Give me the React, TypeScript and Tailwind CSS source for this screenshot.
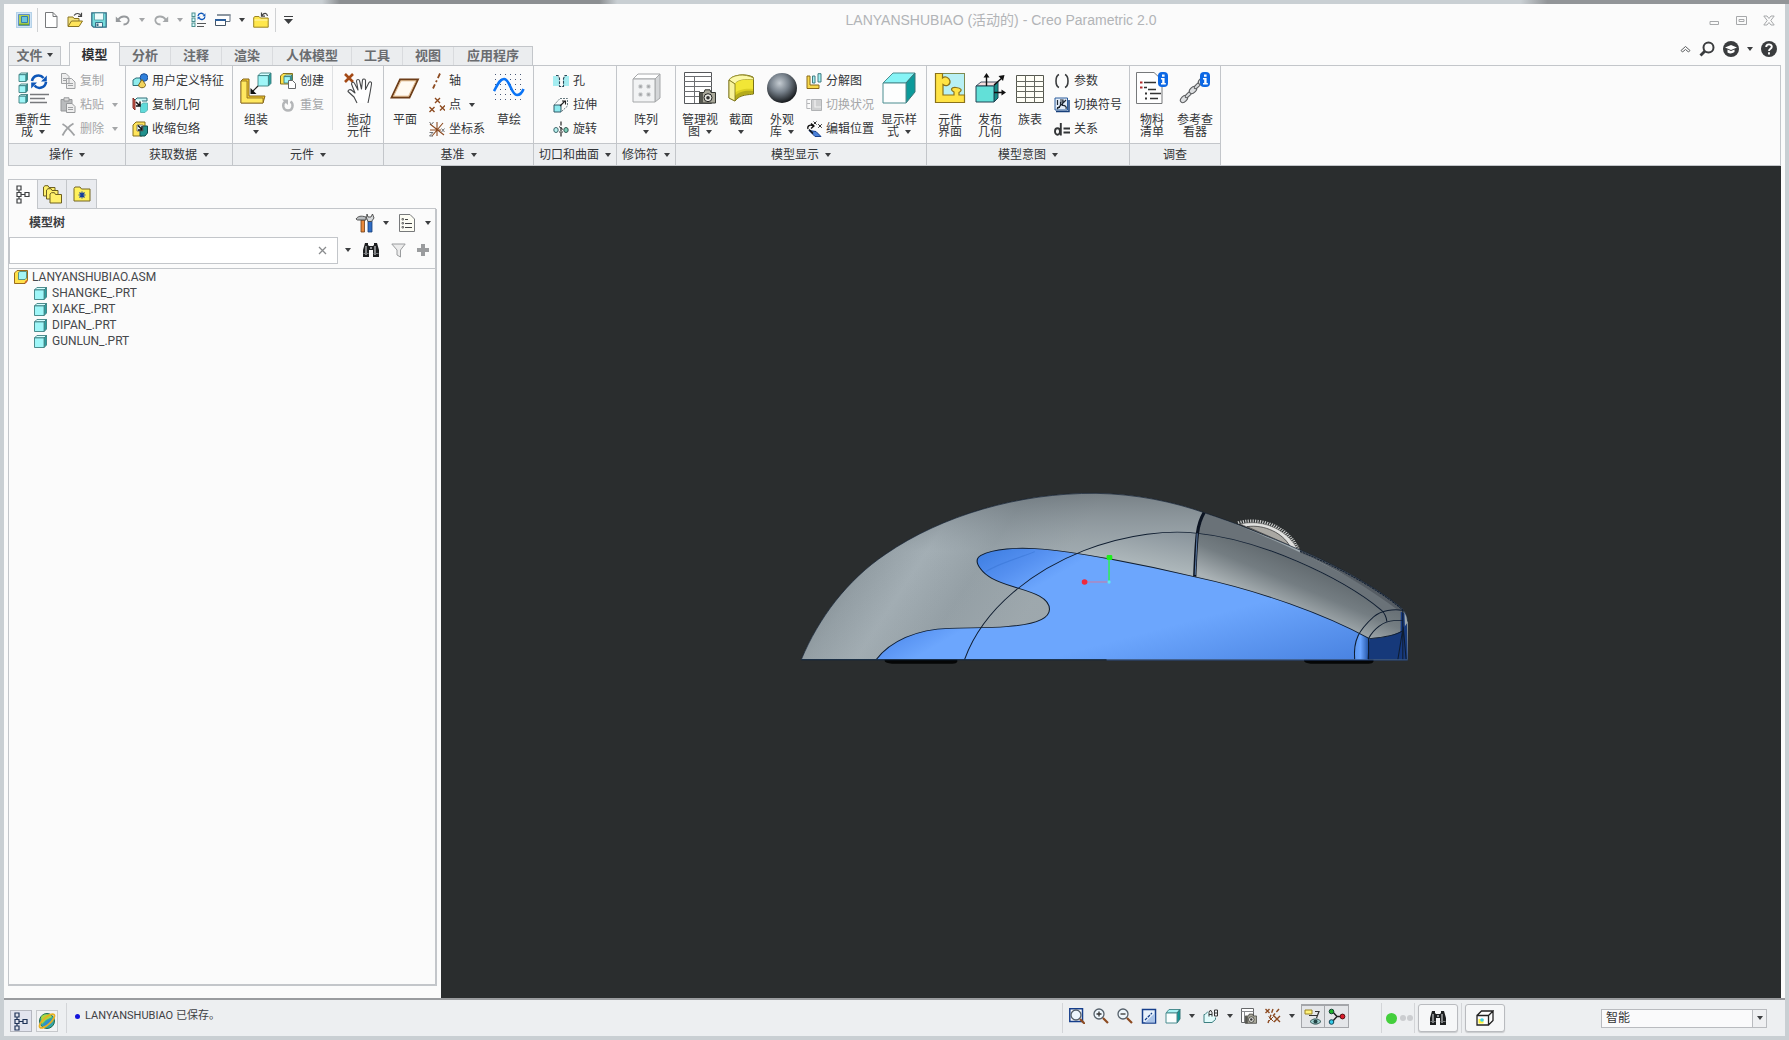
import React from "react";

type Kids = { children?: React.ReactNode };

/* ---------- drawing helpers ---------- */

function Ic({ w = 16, h = 16, vb, children }: Kids & { w?: number; h?: number; vb?: string }) {
  return (
    <svg width={w} height={h} viewBox={vb ?? `0 0 ${w} ${h}`} fill="none" className="block shrink-0" aria-hidden="true">
      {children}
    </svg>
  );
}

function Arrow({ light }: { light?: boolean }) {
  return (
    <Ic w={6} h={4}>
      <path d="M0 0H6L3 4Z" fill={light ? "#a4a6a8" : "#3c3e40"} />
    </Ic>
  );
}

const Cube = ({ x, y, s }: { x: number; y: number; s: number }) => (
  <g transform={`translate(${x} ${y}) scale(${s})`} stroke="#3c7f80" strokeWidth={0.9 / s} strokeLinejoin="round">
    <path d="M0 2 2 0H10L8 2Z" fill="#d4ffff" />
    <path d="M8 2 10 0V8L8 10Z" fill="#28a0a0" />
    <path d="M0 2H8V10H0Z" fill="#9ff6f8" />
  </g>
);

const Swirl = ({ x, y, s }: { x: number; y: number; s: number }) => (
  <g transform={`translate(${x} ${y}) scale(${s})`} stroke="#0d56b8" strokeWidth="2.6">
    <path d="M2 8A6.5 6.5 0 0 1 13.5 5" />
    <path d="M16 9A6.5 6.5 0 0 1 4.500 12.500" />
    <path d="M16.800 2.500V8.500H11Z" fill="#0d56b8" stroke="none" />
    <path d="M1.200 15.500V9.500H7Z" fill="#0d56b8" stroke="none" />
  </g>
);

const Cross = ({ x, y, r = 2.5, c = "#8c4a20", w = 1.4 }: { x: number; y: number; r?: number; c?: string; w?: number }) => (
  <path d={`M${x - r} ${y - r}L${x + r} ${y + r}M${x + r} ${y - r}L${x - r} ${y + r}`} stroke={c} strokeWidth={w} />
);

/* ---------- quick access icons ---------- */

const AppIcon = () => (
  <Ic>
    <rect x="0.500" y="0.500" width="15" height="15" fill="#cfe3f4" stroke="#b5d2e8" />
    <path d="M2.500 2.500H13.500V13.500H2.500Z" fill="#b4cf52" stroke="#5a8fc8" />
    <path d="M5.500 4.500H11.500V10.500H5.500Z" fill="#6cc4dc" stroke="#2f7fae" />
    <path d="M3 12.500H13" stroke="#6aa638" strokeWidth="1.500" />
  </Ic>
);
const NewIcon = () => (
  <Ic>
    <path d="M2.500 .5H10L14 4.500V15.500H2.500Z" fill="#fff" stroke="#77797b" />
    <path d="M10 .5V4.500H14" stroke="#77797b" />
  </Ic>
);
const OpenIcon = () => (
  <Ic>
    <path d="M1 14V5H6L7 6.500H12V9" fill="#f3e27a" stroke="#8a7422" />
    <path d="M1 14.500 4.500 9H15.500L12 14.500Z" fill="#ffe45a" stroke="#8a7422" />
    <path d="M7 3.500C9 .8 12 .8 14 3.500M14.500 .8V4.300H11" stroke="#444" strokeWidth="1.200" />
  </Ic>
);
const SaveIcon = () => (
  <Ic>
    <path d="M.8 .8H15.200V15.200H2.500L.8 13.500Z" fill="#74dcdc" stroke="#356f87" strokeWidth="1.300" />
    <path d="M3.500 1H12.500V8H3.500Z" fill="#eefcfc" stroke="#4e97a2" strokeWidth=".8" />
    <path d="M4.500 10.500H11.500V15H4.500Z" fill="#f3f8f8" stroke="#356f87" />
    <path d="M5.500 11.500H7.500V14H5.500Z" fill="#356f87" />
  </Ic>
);
const UndoIcon = () => (
  <Ic>
    <path d="M3 8C6 3.500 12 3.500 13.500 7C14.500 10 12 12.500 8.500 12.500" stroke="#96999c" strokeWidth="1.800" />
    <path d="M.8 4.500V10H6.500Z" fill="#96999c" />
  </Ic>
);
const RedoIcon = () => (
  <Ic>
    <path d="M13 8C10 3.500 4 3.500 2.500 7C1.500 10 4 12.500 7.500 12.500" stroke="#a5a8aa" strokeWidth="1.800" />
    <path d="M15.200 4.500V10H9.500Z" fill="#a5a8aa" />
  </Ic>
);
const RegenSmall = () => (
  <Ic>
    {[1, 6, 11].map((y) => (
      <rect key={y} x="1" y={y} width="3" height="3.500" fill="#d6fbfb" stroke="#4d9090" />
    ))}
    <Swirl x={6} y={0} s={0.5} />
    <path d="M6 11.500H15M6 14.500H13" stroke="#55585a" strokeWidth="1.200" />
  </Ic>
);
const WindowsIcon = () => (
  <Ic>
    <path d="M2.500 2.500H15V9.500H9" fill="#fff" stroke="#667380" />
    <path d="M2 2H15.500V4H2Z" fill="#8c96a0" />
    <path d="M.5 7.500H10.500V13.500H.5Z" fill="#fff" stroke="#456" />
    <path d="M0 7H11V9H0Z" fill="#2c5f9c" />
  </Ic>
);
const CloseFolder = () => (
  <Ic>
    <path d="M.7 15.200V5.500L2 4.500H6L7.500 6H15.200V15.200Z" fill="#ffe74c" stroke="#9a8424" />
    <path d="M1.500 8H14.500" stroke="#fff8b8" />
    <path d="M9 3.500C11 .5 14 .8 14.500 4M8.500 .5V4.200H12" stroke="#444" strokeWidth="1.200" />
  </Ic>
);

/* ---------- ribbon icons, large ---------- */

const RegenLarge = () => (
  <Ic w={32} h={32}>
    <Cube x={2} y={1} s={0.85} />
    <Cube x={2} y={12} s={0.85} />
    <Cube x={2} y={22.500} s={0.85} />
    <Swirl x={13} y={1} s={1} />
    <path d="M13 22.500H32M13 26.500H28M13 30.500H30" stroke="#77797c" strokeWidth="1.300" />
  </Ic>
);
const AssembleIcon = () => (
  <Ic w={32} h={32}>
    <path d="M1 9 3 7H9V24H25L23 31H1Z" fill="#f1c92e" stroke="#85651a" />
    <path d="M1 9H7V26H23V31H1Z" fill="#ffe860" stroke="#85651a" strokeWidth=".8" />
    <Cube x={18} y={1} s={1.3} />
    <path d="M18 14 12 20" stroke="#222" strokeWidth="1.200" />
    <path d="M10.500 16V22H16.500Z" fill="#111" />
  </Ic>
);
const HandIcon = () => (
  <Ic w={32} h={32}>
    <Cross x={6} y={6} r={4} c="#a44a16" w={2.6} />
    <path
      d="M14 31 11 25 5 19.500C5 17.500 7.500 17 9 18.500L12 21 8.500 12C8.500 10 10.800 9.500 11.600 11.500L15 18 13.500 9C13.800 7 16.200 7 16.600 9L18.500 17 19.500 8C20 6.500 22.300 6.500 22.500 8.500L22.500 17.500 26 10.500C27 9 29 10 28.500 12L27 21 25 31"
      fill="#fff"
      stroke="#46484a"
      strokeWidth="1.100"
      strokeLinejoin="round"
    />
  </Ic>
);
const PlaneIcon = () => (
  <Ic w={32} h={32}>
    <path d="M11 7.500H29L20.500 25.500H2.500Z" fill="#fffaf2" stroke="#6d3d18" strokeWidth="1.800" />
    <path d="M12 8.800H27L19.500 24.200H4.500Z" stroke="#d6a56c" strokeWidth=".8" />
  </Ic>
);
const SketchIcon = () => (
  <Ic w={32} h={32}>
    {[2, 7, 12, 17, 22, 27].map((y) => (
      <path key={y} d={`M2 ${y}.5H31`} stroke="#4a5a78" strokeWidth="1" strokeDasharray="1 4" />
    ))}
    <path d="M1 19C5 12 7 7 11 7C17 7 18 23 24 23C27 23 29 21 30.500 17" stroke="#0a74f6" strokeWidth="2.600" />
  </Ic>
);
const PatternIcon = () => (
  <Ic w={32} h={32}>
    <path d="M3 7 8 2H30L25 7Z" fill="#fff" stroke="#a5a7a9" />
    <path d="M25 7 30 2V26L25 30Z" fill="#d4d6d8" stroke="#a5a7a9" />
    <path d="M3 7H25V30H3Z" fill="#f2f3f4" stroke="#a5a7a9" />
    {[[9, 13], [17, 13], [9, 21], [17, 21]].map(([x, y]) => (
      <path key={`${x}-${y}`} d={`M${x} ${y}h3v3h-3z`} fill="#a0a2a4" stroke="#c5c7c9" />
    ))}
  </Ic>
);
const Camera = ({ x, y, s = 1 }: { x: number; y: number; s?: number }) => (
  <g transform={`translate(${x} ${y}) scale(${s})`}>
    <path d="M.5 3.500H5L6 .8H11L12 3.500H16.500V14H.5Z" fill="#a9a89a" stroke="#33342f" />
    <path d="M.5 4H4V14H.5Z" fill="#55564f" />
    <circle cx="9" cy="8.700" r="4" fill="#e8e8e0" stroke="#222" />
    <circle cx="9" cy="8.700" r="1.800" fill="#333" />
  </g>
);
const ViewManager = () => (
  <Ic w={34} h={32}>
    <path d="M1.500 .5H28.500V31.500H1.500Z" fill="#fff" stroke="#55575a" />
    <path d="M1 4.500H29M1 9.500H29M1 14.500H29M1 19.500H17M1 24.500H17M11.500 4V31" stroke="#6d6f72" />
    <Camera x={16} y={17} />
  </Ic>
);
const SectionIcon = () => (
  <Ic w={32} h={32}>
    <path d="M4 8C7 3 20 1 28 5L28.500 8V22C24 23 15 22 10 29L4 26Z" fill="#ddd022" stroke="#7a7218" />
    <path d="M4 8C7 3 20 1 28.500 6V8C20 7 12 8 10 12Z" fill="#fcf9a8" stroke="#8b8424" strokeWidth=".8" />
    <path d="M10 12C12 8 20 7 28 8V17C20 16 13 18 10 21Z" fill="#f2e636" />
    <path d="M10 24C14 19 22 18 28 19V22C21 21 14 24 10 29Z" fill="#a39b18" opacity=".7" />
    <path d="M4 8 10 12V29L4 26Z" fill="#f8f39c" stroke="#7a7218" strokeWidth=".8" />
  </Ic>
);
const SphereIcon = () => (
  <Ic w={32} h={32}>
    <defs>
      <radialGradient id="sphere" cx=".42" cy=".34" r=".68">
        <stop offset="0" stopColor="#c5ccd2" />
        <stop offset=".45" stopColor="#78828c" />
        <stop offset="1" stopColor="#111417" />
      </radialGradient>
    </defs>
    <circle cx="16" cy="16" r="15" fill="url(#sphere)" />
  </Ic>
);
const DisplayStyle = () => (
  <Ic w={34} h={32}>
    <path d="M1 11 11 1H33L24 11Z" fill="#86f4f6" stroke="#4b8d90" />
    <path d="M24 11 33 1V20L24 31Z" fill="#0c9a9a" stroke="#3b7678" />
    <path d="M1 11H24V31H1Z" fill="#fdfefe" stroke="#4b8d90" />
  </Ic>
);
const InterfaceIcon = () => (
  <Ic w={32} h={32}>
    <rect x="1.500" y="1.500" width="29" height="29" fill="#b8f0f4" stroke="#7e8a50" />
    <path d="M1.500 1.500H8.500V6C11 4 15 5 16 9C16.500 13 12 15 9 12.500V23H20V20C16 18 17 15 22 15.500S29 18 25 20.500V23H30.500V30.500H1.500Z" fill="#ffe345" stroke="#8b721a" strokeWidth="1.200" />
  </Ic>
);
const PublishIcon = () => (
  <Ic w={32} h={32}>
    <path d="M2 14 7 10H24L20 14Z" fill="#f7dede" stroke="#456" />
    <path d="M20 14 24 10V26L20 30Z" fill="#178c86" stroke="#245" />
    <path d="M2 14H20V30H2Z" fill="#62e0d8" stroke="#245" />
    <path d="M12.500 14V4M20 13 28 6M20 20.500H29" stroke="#111" strokeWidth="1.400" />
    <path d="M9.500 5.500 12.500 1 15.500 5.500ZM24.500 4 30.500 3 29 9ZM27.500 17.500 32 20.500 27.500 23.500Z" fill="#111" />
  </Ic>
);
const FamilyTable = () => (
  <Ic w={32} h={32}>
    <path d="M2.500 3.500H29.500V30.500H2.500Z" fill="#fffef6" stroke="#55574f" />
    <path d="M2 9.500H30M2 14.500H30M2 19.500H30M2 25.500H30M11.500 3V31M20.500 3V31" stroke="#66685f" />
  </Ic>
);
const Info = ({ x }: { x: number }) => (
  <g>
    <rect x={x} y="0" width="10" height="15" rx="4" fill="#0d68e4" />
    <path d={`M${x + 4} 2.500h2.600v2.200h-2.600zM${x + 3} 6h3.600v5h1.200v1.600h-4.800v-1.600h1.200v-3.400h-1.200z`} fill="#fff" />
  </g>
);
const BomIcon = () => (
  <Ic w={33} h={32}>
    <path d="M.5 .5H18L26 8V31.500H.5Z" fill="#fefefe" stroke="#77797b" />
    <path d="M8 10.500H20M8 15.500H11M12 17.500H20M14 21.500H25M14 26.500H22" stroke="#333" strokeWidth="1.400" />
    <path d="M4 9.500h2.500v2h-2.500zM4 14.500h2.500v2h-2.500z" fill="#b02a2a" />
    <path d="M9 20.500h2v2h-2zM9 25.500h2v2h-2z" fill="#333" />
    <Info x={22} />
  </Ic>
);
const ChainIcon = () => (
  <Ic w={32} h={32}>
    {[[5, 27], [9.5, 22.5], [14, 18], [18.500, 13.500], [23, 9]].map(([x, y], i) => (
      <ellipse key={i} cx={x} cy={y} rx="4.200" ry={i % 2 ? 1.6 : 2.8} transform={`rotate(-45 ${x} ${y})`} fill="#dcdee0" stroke="#5c5e60" strokeWidth="1.100" />
    ))}
    <Info x={21} />
  </Ic>
);

/* ---------- ribbon icons, small ---------- */

const CopyIcon = () => (
  <Ic>
    <path d="M1.500 .5H6L9 3.500V10.500H1.500ZM6.500 5.500H11.500L15 9V15.500H6.500Z" fill="#eee" stroke="#a0a2a4" />
    <path d="M3 5.500H6M3 7.500H6M8 10.500H13M8 12.500H13" stroke="#a0a2a4" />
  </Ic>
);
const PasteIcon = () => (
  <Ic>
    <path d="M1 2.500H12V14H1Z" fill="#b9bbbd" stroke="#96989a" />
    <path d="M4 .8H9V4H4Z" fill="#ddd" stroke="#96989a" />
    <path d="M6.500 6.500H12L15 9.500V15.500H6.500Z" fill="#eee" stroke="#96989a" />
    <path d="M8 10.500H13M8 12.500H13" stroke="#a0a2a4" />
  </Ic>
);
const DeleteIcon = () => (
  <Ic>
    <path d="M2.500 3C6 5 11 10 14.500 14.500M13.500 2.500C9 5 5 9.500 2.500 14.500" stroke="#a0a2a4" strokeWidth="1.800" />
  </Ic>
);
const UdfIcon = () => (
  <Ic>
    <path d="M1 7 4 5H9V11L7 12.500H1Z" fill="#8fecec" stroke="#2d6e78" />
    <circle cx="12" cy="4.500" r="3.800" fill="#2f80dc" stroke="#1c4f96" />
    <path d="M10 6.500 13.500 11.500C14 15.500 7 16 6.500 12Z" fill="#f2d45c" stroke="#7b6420" />
  </Ic>
);
const CopyGeom = () => (
  <Ic>
    <path d="M1 1 3 3V13L1 11Z" fill="#d6584a" stroke="#7c2f26" />
    <path d="M3 3 5 1H15V4H10" fill="#c8f8f8" stroke="#2d6e78" />
    <path d="M8.500 8 11 6H15.500V13L13 15.500H8.500Z" fill="#5fdada" stroke="#5fb8b8" />
    <path d="M4 5 7 8M8 4.500V9H4" stroke="#111" strokeWidth="1.500" />
  </Ic>
);
const ShrinkIcon = () => (
  <Ic>
    <path d="M1 4 4 1H13V12L10 15H1Z" fill="#ffe45a" stroke="#85701c" />
    <path d="M8 7 11 5H15.500V12L13 15H8Z" fill="#20908c" stroke="#0e4e4c" />
    <path d="M5 4H11V10H5Z" fill="#e8fafa" stroke="#555" strokeWidth=".7" />
    <path d="M6 4.500 10 8.500M10 5V9H6" stroke="#111" strokeWidth="1.400" />
  </Ic>
);
const CreateIcon = () => (
  <Ic>
    <path d="M.5 3 3 .5H12.500V8L10 11H.5Z" fill="#ffe14a" stroke="#85701c" />
    <Cube x={4} y={2} s={0.8} />
    <path d="M8.500 7.500H12.500L15.500 10.500V15.500H8.500Z" fill="#fff" stroke="#66686a" />
  </Ic>
);
const RepeatIcon = () => (
  <Ic>
    <path d="M5.500 4.500C1.500 7 3 13.500 8 13.500S14 7 10.500 4.500" stroke="#b4b6b8" strokeWidth="2.400" />
    <path d="M2 2.500H8V8Z" fill="#b4b6b8" />
  </Ic>
);
const AxisIcon = () => (
  <Ic>
    <path d="M11 .5 4 15.500" stroke="#8c4a20" strokeWidth="1.800" strokeDasharray="5 2.500 2 2.500" />
  </Ic>
);
const PointIcon = () => (
  <Ic>
    <Cross x={8.500} y={3.500} />
    <Cross x={3} y={12.500} />
    <Cross x={13.500} y={11} />
  </Ic>
);
const CsysIcon = () => (
  <Ic>
    <path d="M1 3 15 14M14 2 3 15M8 1V15M1 9H12" stroke="#8c4a20" strokeWidth="1.100" />
    <path d="M.5 1 2.500 3.500 4.500 1M12.500 7.500 15.500 11M15.500 7.500 12.500 11M.5 11.500H4L.5 15H4" stroke="#707274" />
  </Ic>
);
const HoleIcon = () => (
  <Ic>
    <path d="M0 3H4L6 6V13H0ZM16 3H12L10 6V13H16Z" fill="#a5edf1" />
    <path d="M3 2.500H5L6.500 5.500V13.500H10.500V5.500L12 2.500H14" stroke="#2a4a58" strokeWidth="1.100" strokeDasharray="3 1" />
  </Ic>
);
const ExtrudeIcon = () => (
  <Ic>
    <path d="M1 8H8V15H1Z" fill="#8ee9ee" stroke="#2f5b68" />
    <path d="M7 1.500H14.500V9L8 15M1 8 7 1.500" stroke="#66787e" strokeDasharray="2 1" />
    <path d="M7 9 12 4M9 4H12.500V7.500" stroke="#222" strokeWidth="1.100" />
  </Ic>
);
const RevolveIcon = () => (
  <Ic>
    <path d="M8 .5V16" stroke="#222" strokeWidth="1.200" strokeDasharray="4 1.500" />
    <ellipse cx="3" cy="9" rx="2.200" ry="2.500" fill="#b8f2f0" stroke="#3b6468" />
    <ellipse cx="13" cy="9" rx="2.200" ry="2.500" fill="#7ccfb8" stroke="#2f5550" />
    <path d="M6 5.500 10 8.500M6 11H10" stroke="#333" />
  </Ic>
);
const ExplodeIcon = () => (
  <Ic>
    <path d="M1 3H4V12H13V15.500H1Z" fill="#f8d94c" stroke="#8a6a18" />
    <path d="M6.500 3H9V10H6.500Z" fill="#a7f1f3" stroke="#417a80" />
    <path d="M12 .7H15V9H12Z" fill="#a7f1f3" stroke="#417a80" />
  </Ic>
);
const ToggleStatus = () => (
  <Ic>
    <path d="M4.500 2.500H.8V6.500H4M.8 6.500V11.500H4.500" stroke="#b4b6b8" />
    <path d="M5.500 2.500H15.500V13.500H5.500Z" fill="#cfd0d1" stroke="#b0b2b4" />
    <path d="M9 3V10H15" stroke="#f2f2f2" strokeWidth="1.200" />
  </Ic>
);
const EditPos = () => (
  <Ic>
    <path d="M3 9.500 10 10.500 15 15.500H9Z" fill="#4a80d8" stroke="#153f8c" />
    <path d="M2 8C1 5 4 3 7 5M5 2.500 8 5 5 7.500" stroke="#111" strokeWidth="1.300" />
    <Cross x={9} y={2} r={1.500} c="#333" w={1} />
    <Cross x={14} y={5} r={1.800} c="#333" w={1} />
    <path d="M3 8.500 7 12.500" stroke="#111" strokeWidth="1.400" />
  </Ic>
);
const ParamIcon = () => (
  <Ic>
    <path d="M5 1.500C1 3 1 13 5 14.500M11 1.500C15 3 15 13 11 14.500" stroke="#3a3c3e" strokeWidth="1.600" />
  </Ic>
);
const SymbolsIcon = () => (
  <Ic>
    <path d="M1 1H13.500V13H1Z" fill="#e4edf8" stroke="#2b5c9c" />
    <path d="M2 14.500H15V3" stroke="#173f7a" strokeWidth="1.500" />
    <path d="M3.500 3V8M6 3H9V5H6.500V7.500H9M3 12 12 3M8 8.500C11 8 13 10 12 12M3 10.500H6" stroke="#1d2733" strokeWidth="1.200" />
  </Ic>
);
const RelationIcon = () => (
  <Ic>
    <ellipse cx="3.500" cy="10.500" rx="2.500" ry="3.200" stroke="#333537" strokeWidth="1.900" />
    <path d="M6.800 2V14.500M9.500 7.500H16M9.500 11.500H16" stroke="#333537" strokeWidth="1.900" />
  </Ic>
);

/* ---------- ribbon ---------- */

function Large({ icon, lines, arrow }: { icon: React.ReactNode; lines: string[]; arrow?: boolean }) {
  const last = lines.length - 1;
  return (
    <button type="button" className="flex w-10 shrink-0 flex-col items-center pt-1.5">
      {icon}
      <span className="mt-2.5 flex flex-col items-center text-xs leading-3 whitespace-nowrap">
        {lines.map((l, i) => (
          <span key={l} className="flex items-center gap-1.5">
            {l}
            {arrow && last > 0 && i === last && <Arrow />}
          </span>
        ))}
        {arrow && last === 0 && (
          <span className="flex h-3 items-center">
            <Arrow />
          </span>
        )}
      </span>
    </button>
  );
}

type SmallItem = { icon: React.ReactNode; label: string; off?: boolean; arrow?: boolean };

function Smalls({ items, ml = "" }: { items: SmallItem[]; ml?: string }) {
  return (
    <div className={`flex shrink-0 flex-col pt-[3px] ${ml}`}>
      {items.map((s) => (
        <button key={s.label} type="button" disabled={s.off} className={`flex h-6 items-center text-xs whitespace-nowrap ${s.off ? "text-[#a4a6a8]" : ""}`}>
          {s.icon}
          <span className="ml-1">{s.label}</span>
          {s.arrow && (
            <span className="ml-2">
              <Arrow light={s.off} />
            </span>
          )}
        </button>
      ))}
    </div>
  );
}

function Group({ title, w, pad = "", arrow = true, children }: Kids & { title: string; w: string; pad?: string; arrow?: boolean }) {
  return (
    <section className={`flex shrink-0 flex-col border-r border-[#c3c6ca] ${w}`}>
      <div className={`flex h-[77px] ${pad}`}>{children}</div>
      <button type="button" className="flex h-[23px] items-center justify-center gap-1.5 border-y border-[#c3c6ca] bg-[#edeff1] text-xs whitespace-nowrap">
        {title}
        {arrow && <Arrow />}
      </button>
    </section>
  );
}

function Ribbon() {
  return (
    <div className="mr-1 ml-1 flex h-[101px] shrink-0 border border-b-0 border-[#c3c6ca] bg-[#fbfbfb]">
      <Group title="操作" w="w-[117px]" pad="pl-1">
        <Large icon={<RegenLarge />} lines={["重新生", "成"]} arrow />
        <Smalls
          ml="ml-[7px]"
          items={[
            { icon: <CopyIcon />, label: "复制", off: true },
            { icon: <PasteIcon />, label: "粘贴", off: true, arrow: true },
            { icon: <DeleteIcon />, label: "删除", off: true, arrow: true },
          ]}
        />
      </Group>
      <Group title="获取数据" w="w-[107px]" pad="pl-1.5">
        <Smalls
          items={[
            { icon: <UdfIcon />, label: "用户定义特征" },
            { icon: <CopyGeom />, label: "复制几何" },
            { icon: <ShrinkIcon />, label: "收缩包络" },
          ]}
        />
      </Group>
      <Group title="元件" w="w-[151px]" pad="pl-[3px]">
        <Large icon={<AssembleIcon />} lines={["组装"]} arrow />
        <Smalls
          ml="ml-1"
          items={[
            { icon: <CreateIcon />, label: "创建" },
            { icon: <RepeatIcon />, label: "重复", off: true },
          ]}
        />
        <div className="mr-1.5 ml-2 h-16 w-px bg-[#dfe1e3]" />
        <Large icon={<HandIcon />} lines={["拖动", "元件"]} />
      </Group>
      <Group title="基准" w="w-[150px]" pad="pl-px">
        <Large icon={<PlaneIcon />} lines={["平面"]} />
        <Smalls
          ml="ml-1"
          items={[
            { icon: <AxisIcon />, label: "轴" },
            { icon: <PointIcon />, label: "点", arrow: true },
            { icon: <CsysIcon />, label: "坐标系" },
          ]}
        />
        <div className="ml-1 flex">
          <Large icon={<SketchIcon />} lines={["草绘"]} />
        </div>
      </Group>
      <Group title="切口和曲面" w="w-[83px]" pad="justify-center">
        <Smalls
          items={[
            { icon: <HoleIcon />, label: "孔" },
            { icon: <ExtrudeIcon />, label: "拉伸" },
            { icon: <RevolveIcon />, label: "旋转" },
          ]}
        />
      </Group>
      <Group title="修饰符" w="w-[59px]" pad="justify-center">
        <Large icon={<PatternIcon />} lines={["阵列"]} arrow />
      </Group>
      <Group title="模型显示" w="w-[251px]" pad="gap-px pl-1">
        <Large icon={<ViewManager />} lines={["管理视", "图"]} arrow />
        <Large icon={<SectionIcon />} lines={["截面"]} arrow />
        <Large icon={<SphereIcon />} lines={["外观", "库"]} arrow />
        <Smalls
          ml="ml-[3px]"
          items={[
            { icon: <ExplodeIcon />, label: "分解图" },
            { icon: <ToggleStatus />, label: "切换状况", off: true },
            { icon: <EditPos />, label: "编辑位置" },
          ]}
        />
        <div className="ml-1 flex">
          <Large icon={<DisplayStyle />} lines={["显示样", "式"]} arrow />
        </div>
      </Group>
      <Group title="模型意图" w="w-[203px]" pad="pl-[3px]">
        <Large icon={<InterfaceIcon />} lines={["元件", "界面"]} />
        <Large icon={<PublishIcon />} lines={["发布", "几何"]} />
        <Large icon={<FamilyTable />} lines={["族表"]} />
        <Smalls
          ml="ml-1"
          items={[
            { icon: <ParamIcon />, label: "参数" },
            { icon: <SymbolsIcon />, label: "切换符号" },
            { icon: <RelationIcon />, label: "关系" },
          ]}
        />
      </Group>
      <Group title="调查" w="w-[91px]" pad="gap-[3px] pl-0.5" arrow={false}>
        <Large icon={<BomIcon />} lines={["物料", "清单"]} />
        <Large icon={<ChainIcon />} lines={["参考查", "看器"]} />
      </Group>
      <span className="flex-1 border-b border-[#c3c6ca]" />
    </div>
  );
}

/* ---------- header ---------- */

const IconBtn = ({ label, children }: Kids & { label: string }) => (
  <button type="button" aria-label={label} className="flex shrink-0 items-center justify-center">
    {children}
  </button>
);

function TitleBar() {
  return (
    <header className="flex h-8 shrink-0 items-center pl-3">
      <div className="flex items-center">
        <IconBtn label="Creo"><AppIcon /></IconBtn>
        <span className="mx-[5px] h-6 w-px bg-[#cfd1d3]" />
        <div className="flex items-center gap-2">
          <IconBtn label="新建"><NewIcon /></IconBtn>
          <IconBtn label="打开"><OpenIcon /></IconBtn>
          <IconBtn label="保存"><SaveIcon /></IconBtn>
          <IconBtn label="撤消"><UndoIcon /></IconBtn>
          <IconBtn label="撤消列表"><Arrow light /></IconBtn>
          <IconBtn label="重做"><RedoIcon /></IconBtn>
          <IconBtn label="重做列表"><Arrow light /></IconBtn>
          <IconBtn label="重新生成"><RegenSmall /></IconBtn>
          <IconBtn label="窗口"><WindowsIcon /></IconBtn>
          <IconBtn label="窗口列表"><Arrow /></IconBtn>
          <IconBtn label="关闭"><CloseFolder /></IconBtn>
        </div>
        <span className="mr-2 ml-1.5 h-6 w-px bg-[#cfd1d3]" />
        <IconBtn label="自定义">
          <Ic w={9} h={8}>
            <path d="M0 .5H9" stroke="#3c3e40" />
            <path d="M0 3H9L4.500 8Z" fill="#3c3e40" />
          </Ic>
        </IconBtn>
      </div>
      <h1 className="flex-1 text-center font-['Liberation_Sans','Noto_Sans_CJK_SC',sans-serif] text-sm text-[#b2b4b7]">
        LANYANSHUBIAO (活动的) - Creo Parametric 2.0
      </h1>
      <div className="flex items-center gap-4 pr-2.5">
        <IconBtn label="最小化">
          <Ic w={11} h={11}><path d="M1 6.500H9.500V9.500H1Z" stroke="#a6a8aa" /></Ic>
        </IconBtn>
        <IconBtn label="还原">
          <Ic w={11} h={11}><path d="M.5 1.500H10.500V9.500H.5ZM3 4.500H8V6.500H3Z" stroke="#a6a8aa" /></Ic>
        </IconBtn>
        <IconBtn label="关闭窗口">
          <Ic w={12} h={11}>
            <path d="M.8 1H4L6 3.500 8 1H11.200L7.800 5.500 11.200 10H8L6 7.500 4 10H.8L4.200 5.500Z" stroke="#a6a8aa" />
          </Ic>
        </IconBtn>
      </div>
    </header>
  );
}

function Tabs() {
  const tabs = ["分析", "注释", "渲染", "人体模型", "工具", "视图", "应用程序"];
  return (
    <nav className="flex h-[29px] shrink-0 items-end pl-1 text-[13px] leading-none font-bold text-[#6a6c6f]">
      <button type="button" className="flex h-[19px] w-[53px] items-center justify-center gap-1 border border-b-0 border-[#c3c6ca] bg-[#ebedef] pb-0.5">
        文件
        <Arrow />
      </button>
      <button type="button" className="relative z-10 ml-2 flex h-6 w-[51px] translate-y-px items-center justify-center border border-b-0 border-[#c3c6ca] bg-[#fbfbfb] text-[#2e3033]">
        模型
      </button>
      <div className="flex h-[19px] border-t border-[#c3c6ca] bg-[#ebedef]">
        {tabs.map((t) => (
          <button key={t} type="button" className={`flex items-center justify-center border-r pb-0.5 whitespace-nowrap ${t.length > 2 ? "px-[13px]" : "px-3"} ${t === "应用程序" ? "border-[#c3c6ca]" : "border-[#d9dbde]"}`}>
            {t}
          </button>
        ))}
      </div>
      <div className="mr-2 mb-2 ml-auto flex h-4 items-center gap-2">
        <IconBtn label="最小化功能区">
          <Ic w={11} h={8}><path d="M1 5.500 5.500 1.500 10 5.500 8.500 7 5.500 4.500 2.500 7Z" stroke="#4a4c4e" strokeWidth=".9" /></Ic>
        </IconBtn>
        <IconBtn label="搜索">
          <Ic><circle cx="9.500" cy="6.500" r="5" stroke="#3a3c3e" strokeWidth="2" /><path d="M6 10 1.500 14.500" stroke="#3a3c3e" strokeWidth="2.800" /></Ic>
        </IconBtn>
        <IconBtn label="学习">
          <Ic>
            <circle cx="8" cy="8" r="8" fill="#3a3c3e" />
            <path d="M2 6.500 8 4 14 6.500 8 9ZM4.500 8.500V11.500C7 13 9.500 12.500 11.500 11V8.500L8 10Z" fill="#fff" />
          </Ic>
        </IconBtn>
        <IconBtn label="学习列表"><Arrow /></IconBtn>
        <IconBtn label="帮助">
          <Ic>
            <circle cx="8" cy="8" r="8" fill="#3a3c3e" />
            <path d="M5.200 6C5.200 2.500 10.800 2.600 10.800 5.800C10.800 7.800 8 7.800 8 10M8 11.300V13.400" stroke="#fff" strokeWidth="1.900" />
          </Ic>
        </IconBtn>
      </div>
    </nav>
  );
}

/* ---------- model tree ---------- */

const TreeGlyph = ({ c = "#3e4042" }: { c?: string }) => (
  <Ic w={14} h={19}>
    <path d="M1 1H5V5H1ZM1 7.500H5V11.500H1ZM1 14H5V18H1ZM9 7.500H13V11.500H9ZM3 5V7.500M3 11.500V14M5 9.500H9" stroke={c} strokeWidth="1.200" />
  </Ic>
);
const Binoculars = () => (
  <Ic w={18} h={16}>
    <path d="M3 1H6V3L7 4H11L12 3V1H15L17 8V15H11V8H7V15H1V8Z" fill="#1d1f20" />
    <path d="M4 4V13M13 4V13M8 6H10" stroke="#b9bcbe" strokeWidth="1.300" />
    <path d="M1.500 11.500H6.500M11.500 11.500H16.500" stroke="#777a7c" />
  </Ic>
);
const PartIcon = () => (
  <Ic w={13} h={13}>
    <Cube x={0.5} y={0.5} s={1.2} />
  </Ic>
);

function ModelTree() {
  const parts = ["SHANGKE_.PRT", "XIAKE_.PRT", "DIPAN_.PRT", "GUNLUN_.PRT"];
  return (
    <aside className="flex w-[437px] shrink-0 flex-col bg-[#fbfbfb] pt-[13px] pr-1 pb-3 pl-1">
      <div className="flex h-[30px] pr-px">
        <button type="button" aria-label="模型树" className="flex w-[29px] items-center justify-center border-t border-l border-[#c3c6ca]">
          <TreeGlyph />
        </button>
        <button type="button" aria-label="文件夹浏览器" className="flex w-[30px] items-center justify-center border border-[#c3c6ca] bg-[#e9ebef]">
          <Ic w={19} h={19}>
            {[[0, 0], [3, 3], [6.500, 7]].map(([x, y]) => (
              <path key={x} d={`M${x + 0.5} ${y + 11}V${y + 2}L${x + 2} ${y + 0.7}H${x + 5}L${x + 6} ${y + 2.5}H${x + 12}V${y + 11}Z`} fill="#fff06a" stroke="#6e6020" />
            ))}
          </Ic>
        </button>
        <button type="button" aria-label="收藏夹" className="flex w-[30px] items-center justify-center border border-l-0 border-[#c3c6ca] bg-[#e9ebef]">
          <Ic w={18} h={16}>
            <path d="M1 15V2.500L2 1H7L8.500 3H17V15Z" fill="#fff15c" stroke="#746624" />
            <path d="M9 5.500V12.500M5.500 9H12.500M6.500 6.500 11.500 11.500M11.500 6.500 6.500 11.500" stroke="#123c9e" strokeWidth="1.100" />
          </Ic>
        </button>
        <span className="flex-1 border-b border-[#c3c6ca]" />
      </div>
      <div className="flex flex-1 flex-col border border-t-0 border-r-2 border-b-2 border-[#c3c6ca]">
        <div className="flex h-7 items-center pr-1 pl-5">
          <h2 className="mr-auto text-xs font-bold text-[#3c3e41]">模型树</h2>
          <div className="flex items-center">
            <IconBtn label="设置">
              <Ic w={20} h={20}>
                <path d="M6 7H9.500V19H6Z" fill="#e8883a" stroke="#6d3d18" strokeWidth=".8" />
                <path d="M1 6C3 3 6 2.500 11 4V7H2.500Z" fill="#b9bdc0" stroke="#444" strokeWidth=".9" />
                <path d="M13 8H17V19H13Z" fill="#2f6cc4" stroke="#173f7a" strokeWidth=".8" />
                <path d="M12 1 13 4H16L17.500 1 19 5 16.500 8.500H13L11.500 5Z" fill="#d5d8da" stroke="#444" strokeWidth=".9" />
              </Ic>
            </IconBtn>
            <span className="ml-2"><IconBtn label="设置列表"><Arrow /></IconBtn></span>
            <span className="ml-2.5">
              <IconBtn label="显示">
                <Ic w={16} h={18}>
                  <path d="M.5 .5H11L15.500 5V17.500H.5Z" fill="#fdfdf4" stroke="#77797b" />
                  <path d="M6 5.500H9M6 9.500H13M6 13.500H13" stroke="#444" />
                  <path d="M3 4.500h1.500v1.500H3zM3 8.500h1.500v1.500H3zM3 12.500h1.500v1.500H3z" stroke="#555" strokeWidth=".8" />
                </Ic>
              </IconBtn>
            </span>
            <span className="ml-2.5"><IconBtn label="显示列表"><Arrow /></IconBtn></span>
          </div>
        </div>
        <div className="flex h-8 items-center border-b border-[#c3c6ca] pb-[5px]">
          <div className="flex h-[27px] w-[329px] items-center border border-[#c3c6ca] bg-white pr-2.5">
            <input type="text" aria-label="搜索模型树" className="h-5 min-w-0 flex-1 bg-white px-2 text-xs outline-none" />
            <IconBtn label="清除">
              <Ic w={9} h={9}><Cross x={4.5} y={4.5} r={3.5} c="#8a8c8e" w={1.3} /></Ic>
            </IconBtn>
          </div>
          <div className="ml-[7px] flex flex-1 items-center justify-between pr-1.5">
            <IconBtn label="搜索选项"><Arrow /></IconBtn>
            <IconBtn label="查找"><Binoculars /></IconBtn>
            <IconBtn label="过滤">
              <Ic w={15} h={15}><path d="M.8 1H14.200L9.500 7V14L6 12V7Z" fill="#ececec" stroke="#9a9c9e" /></Ic>
            </IconBtn>
            <IconBtn label="添加">
              <Ic w={12} h={12}><path d="M6 0V12M0 6H12" stroke="#9a9c9e" strokeWidth="4" /></Ic>
            </IconBtn>
          </div>
        </div>
        <ul className="pl-[5px] text-xs leading-4 text-[#46484b]">
          <li>
            <div className="flex h-4 items-center gap-1">
              <Ic w={14} h={14}>
                <path d="M.5 3 3 .5H13.500V10.500L11 13.500H.5Z" fill="#ffe14a" stroke="#9a6a1c" />
                <path d="M4.500 2.500 6 1.500H12.500V8L11 9.500H4.500Z" fill="#a4f4f6" stroke="#3c7f80" strokeWidth=".8" />
                <path d="M11 13 13 10.500" stroke="#d0602a" strokeWidth="1.500" />
              </Ic>
              LANYANSHUBIAO.ASM
            </div>
            <ul className="pl-5">
              {parts.map((p) => (
                <li key={p} className="flex h-4 items-center gap-[5px]">
                  <PartIcon />
                  {p}
                </li>
              ))}
            </ul>
          </li>
        </ul>
      </div>
    </aside>
  );
}

/* ---------- 3D viewport ---------- */

const BODY =
  "M28 538C70 415 140 300 235 222C370 108 560 38 750 40C850 42 940 66 1015 98C1090 128 1170 168 1250 210C1340 256 1430 318 1490 375Q1513 395 1514 425V538Z";
const BLUE =
  "M212 538C245 485 310 447 390 445C450 443 490 444 530 440C590 435 636 422 636 388C636 350 590 336 550 321C500 302 480 288 468 268C455 248 455 235 468 226C500 205 560 203 600 206C700 213 880 258 990 290C1150 332 1310 402 1420 476L1417 538Z";

function Viewport() {
  return (
    <main className="mr-1 flex min-w-0 flex-1 bg-[#2a2d2e]">
      <svg className="h-full w-full" viewBox="441 166 1340 832" role="img" aria-label="LANYANSHUBIAO">
        <defs>
          <linearGradient id="shell" x1="60" y1="300" x2="800" y2="700" gradientUnits="userSpaceOnUse">
            <stop offset="0" stopColor="#7f898f" />
            <stop offset=".12" stopColor="#97a2a8" />
            <stop offset=".24" stopColor="#a8b3b9" />
            <stop offset=".4" stopColor="#98a3a9" />
            <stop offset=".6" stopColor="#a3adb2" />
          </linearGradient>
          <linearGradient id="top" x1="0" y1="0" x2="0" y2="1">
            <stop offset="0" stopColor="#545c62" stopOpacity=".55" />
            <stop offset=".35" stopColor="#7a858c" stopOpacity=".1" />
            <stop offset="1" stopColor="#8f999e" stopOpacity=".25" />
          </linearGradient>
          <linearGradient id="side" x1="960" y1="150" x2="930" y2="280" gradientUnits="userSpaceOnUse">
            <stop offset="0" stopColor="#87929a" />
            <stop offset=".55" stopColor="#9ea8ad" />
            <stop offset="1" stopColor="#b0babd" />
          </linearGradient>
          <linearGradient id="front" x1="1260" y1="225" x2="1170" y2="400" gradientUnits="userSpaceOnUse">
            <stop offset="0" stopColor="#5c6469" />
            <stop offset=".45" stopColor="#747d82" />
            <stop offset=".85" stopColor="#aab2b5" />
          </linearGradient>
          <linearGradient id="blue" x1="450" y1="210" x2="600" y2="420" gradientUnits="userSpaceOnUse">
            <stop offset="0" stopColor="#3b7ce0" />
            <stop offset=".4" stopColor="#5590f0" />
            <stop offset=".7" stopColor="#6ca6fd" />
          </linearGradient>
          <linearGradient id="shade" x1="950" y1="300" x2="1060" y2="640" gradientUnits="userSpaceOnUse">
            <stop offset=".35" stopColor="#3f78d8" stopOpacity="0" />
            <stop offset="1" stopColor="#3f78d8" stopOpacity=".75" />
          </linearGradient>
          <linearGradient id="nose" x1="1384" y1="0" x2="1420" y2="0" gradientUnits="userSpaceOnUse">
            <stop offset="0" stopColor="#5b96f0" />
            <stop offset=".4" stopColor="#6aa5ff" />
            <stop offset="1" stopColor="#1c4c9c" />
          </linearGradient>
          <clipPath id="body"><path d={BODY} /></clipPath>
        </defs>
        <g transform="translate(790 480) scale(.408 .3333)">
          <path d="M232 538H410V545Q408 551 398 551H250Q234 550 232 543ZM1260 538H1430V545Q1428 551 1418 551H1276Q1262 550 1260 543Z" fill="#050606" />
          <path d="M1098 128C1165 108 1225 150 1246 210" stroke="#c9cbca" strokeWidth="9" strokeDasharray="3 3" fill="none" />
          <path d="M1104 132C1165 116 1222 155 1243 208L1220 195Z" fill="#e0e0de" stroke="#777" strokeWidth="1.500" />
          <path d="M1120 140C1165 132 1208 162 1224 196Z" fill="#aaa8a3" stroke="#333" strokeWidth="2" />
          <path d={BODY} fill="url(#shell)" />
          <path d={BODY} fill="url(#top)" />
          <g clipPath="url(#body)">
            <path d="M700 220C830 160 930 150 1000 160L990 290C900 262 800 235 700 220Z" fill="url(#side)" />
            <path d="M1000 160C1150 178 1350 290 1455 395L1500 390V538H1420V476C1310 402 1150 332 990 290Z" fill="url(#front)" />
            <path d="M1015 98C1090 128 1340 250 1514 400L1455 395C1350 290 1150 178 1000 160Z" fill="#6a7278" />
            <path d="M1250 206C1340 252 1450 330 1514 400L1490 390C1420 325 1330 260 1250 218Z" fill="#555c63" />
          </g>
          <path d={BLUE} fill="url(#blue)" />
          <path d={BLUE} fill="url(#shade)" />
          <path d="M1384 538C1380 500 1386 478 1395 461L1420 476 1417 538Z" fill="url(#nose)" />
          <path d="M1420 476C1460 474 1490 460 1500 452L1512 430 1514 538H1415Z" fill="#16397a" />
          <path d="M1497 395 1506 400 1510 538H1496Z" fill="#173a80" />
          <path d="M480 275C510 250 560 235 600 215" stroke="#3672d2" strokeWidth="3" opacity=".5" fill="none" />
          <g fill="none" stroke="#0f1d30" strokeWidth="2.600">
            <path d={BLUE.slice(0, BLUE.indexOf("L1417"))} />
            <path d="M428 538C475 380 600 270 720 212C830 160 930 150 1000 160C1150 178 1350 290 1450 391C1460 403 1462 413 1463 425" />
            <path d="M1384 538C1380 480 1395 450 1430 411C1450 390 1480 387 1502 391" />
            <path d="M1418 538V476C1430 447 1455 423 1480 422H1502" />
            <path d="M1420 476C1460 472 1490 462 1502 452M1502 390V538M1490 538 1503 440 1510 538" />
            <path d="M1250 214C1340 260 1440 325 1502 390" strokeDasharray="6 2" />
            <path d={BODY.slice(0, BODY.indexOf("V538"))} strokeWidth="1.800" />
          </g>
          <path d="M1015 98C998 132 996 165 992 290" stroke="#0c1422" strokeWidth="8" fill="none" />
          <path d="M998 160 993 285" stroke="#5c7ba5" strokeWidth="2.500" fill="none" />
          <path d="M28 539H776" stroke="#0c2440" strokeWidth="3" />
          <path d="M776 540H1514" stroke="#2d5aa8" strokeWidth="2" />
          <path d="M722 306H782" stroke="#d07aa0" strokeWidth="3" />
          <path d="M782 306V235" stroke="#35e860" strokeWidth="4" />
          <ellipse cx="722" cy="306" rx="7" ry="8" fill="#f02a3c" />
          <rect x="776" y="225" width="14" height="15" rx="3" fill="#1cf01c" />
          <ellipse cx="782" cy="306" rx="4" ry="5" fill="#5fe6f4" />
        </g>
      </svg>
    </main>
  );
}

/* ---------- status bar ---------- */

const Lens = ({ x, y }: { x: number; y: number }) => (
  <g>
    <circle cx={x} cy={y} r="5" fill="#eef6fc" stroke="#55606a" strokeWidth="1.300" />
    <path d={`M${x + 4} ${y + 4}L${x + 9} ${y + 9}`} stroke="#8c4a20" strokeWidth="2.200" />
  </g>
);

const Sep = ({ m = "" }: { m?: string }) => <span className={`h-[30px] w-px bg-[#d3d5d8] ${m}`} />;

function StatusBar() {
  return (
    <footer className="flex h-[38px] shrink-0 items-center border-t-2 border-[#9a9c9f] bg-[#edeff1] pr-[18px] pl-1.5 text-xs">
      <div className="flex items-center gap-1 pt-1.5">
        <button type="button" aria-label="导航器" className="flex h-[22px] w-[22px] items-center justify-center border border-[#b5b7bf] bg-[#e2e4ee]">
          <TreeGlyph c="#1f3358" />
        </button>
        <button type="button" aria-label="浏览器" className="flex h-[22px] w-[22px] items-center justify-center border border-[#c6c8cb] bg-[#f2f3f4]">
          <Ic w={18} h={18}>
            <circle cx="9" cy="9" r="7.500" fill="#35a8a0" stroke="#1d6a50" />
            <path d="M3 5C6 1 12 2 14 5L8 8 4 12Z" fill="#a8d840" />
            <path d="M5 13C8 9 12 6 15 8C14 13 10 15 7 15Z" fill="#2d8fd0" />
            <ellipse cx="9" cy="9" rx="9.500" ry="3.600" transform="rotate(-42 9 9)" stroke="#e8b020" strokeWidth="1.800" />
          </Ic>
        </button>
      </div>
      <Sep m="ml-2" />
      <span className="mb-1 ml-2 h-[5px] w-[5px] rounded-full bg-[#1414dc]" />
      <p className="mb-1 ml-[5px] text-[11px] text-[#3f4144]">LANYANSHUBIAO 已保存。</p>

      <Sep m="ml-auto" />
      <div className="ml-1.5 flex items-center gap-2 pb-1">
        <IconBtn label="重新调整">
          <Ic><path d="M.8 .8H13.500V13.500H.8Z" fill="#fff" stroke="#163f8c" strokeWidth="1.500" /><Lens x={7} y={7} /></Ic>
        </IconBtn>
        <IconBtn label="放大"><Ic><Lens x={6} y={6} /><path d="M3.500 6H8.500M6 3.500V8.500" stroke="#333" strokeWidth="1.300" /></Ic></IconBtn>
        <IconBtn label="缩小"><Ic><Lens x={6} y={6} /><path d="M3.500 6H8.500" stroke="#333" strokeWidth="1.300" /></Ic></IconBtn>
        <IconBtn label="重画">
          <Ic>
            <path d="M1.500 1.500H14.500V15H1.500Z" fill="#e8f2fc" stroke="#163f8c" strokeWidth="1.500" />
            <path d="M14 5V14.500H4Z" fill="#a9c3e8" />
            <path d="M4 12 11 5" stroke="#163f8c" strokeWidth="1.300" strokeDasharray="3 1" />
          </Ic>
        </IconBtn>
        <IconBtn label="显示样式">
          <Ic>
            <path d="M1 5 4 1.500H15L12 5Z" fill="#a8f2f4" stroke="#4b8d90" />
            <path d="M12 5 15 1.500V11L12 15Z" fill="#0c9a9a" stroke="#3b7678" />
            <path d="M1 5H12V15H1Z" fill="#fafefe" stroke="#4b8d90" />
          </Ic>
        </IconBtn>
        <IconBtn label="显示样式列表"><Arrow /></IconBtn>
        <IconBtn label="已保存方向">
          <Ic>
            <path d="M5 3.500 2 6.500H1V14.500H9L12.500 11.500V9.500" fill="#e2fbfb" stroke="#3c7f80" />
            <path d="M6 8.500V4.500L7.500 2 9 4.500V8.500M6 6.500H9M11.500 2V8H14.500V2ZM11.500 5H14.500" stroke="#333" />
          </Ic>
        </IconBtn>
        <IconBtn label="方向列表"><Arrow /></IconBtn>
        <IconBtn label="视图管理器">
          <Ic><path d="M.5 .5H12.500V14.500H.5Z" fill="#fff" stroke="#66686a" /><path d="M.5 3.500H12.500M3.500 3.500V14" stroke="#8a8c8e" /><Camera x={4} y={5.5} s={0.7} /></Ic>
        </IconBtn>
        <IconBtn label="基准显示">
          <Ic>
            <Cross x={2.500} y={3} r={2} />
            <path d="M8 1 3 15M14 1 8 8" stroke="#8c4a20" strokeWidth="1.400" strokeDasharray="4 2" />
            <Cross x={12} y={11} r={3} />
            <Cross x={6} y={11} r={2.500} w={1} />
          </Ic>
        </IconBtn>
        <IconBtn label="基准列表"><Arrow /></IconBtn>
      </div>
      <div className="ml-1.5 flex pb-1">
        <button type="button" aria-label="注释显示" className="flex h-6 w-6 items-center justify-center border border-t-2 border-[#a4a6aa] bg-[#e4e6e9]">
          <Ic w={18} h={18}>
            <path d="M1 2H8V6H1Z" fill="#fff27a" stroke="#9a8424" />
            <path d="M5 7.500H13M11 3.500H15L12.500 10" stroke="#333" strokeWidth="1.200" />
            <path d="M6 13.500C9 10 14 10 17 13.500C14 17 9 17 6 13.500Z" fill="#9cc" stroke="#355" />
            <circle cx="11.500" cy="13.500" r="2" fill="#244" />
          </Ic>
        </button>
        <button type="button" aria-label="旋转中心" className="flex h-6 w-6 items-center justify-center border border-t-2 border-l-0 border-[#a4a6aa] bg-[#e4e6e9]">
          <Ic w={18} h={18}>
            <path d="M4 3 9 8.500H15M9 8.500 4 14" stroke="#222" strokeWidth="1.400" />
            <circle cx="3.500" cy="3.500" r="2.300" fill="#1fb32a" stroke="#143" />
            <circle cx="14.500" cy="8.500" r="2.400" fill="#dc1c2c" stroke="#511" />
            <circle cx="3.500" cy="14" r="2.300" fill="#34cbe8" stroke="#145" />
          </Ic>
        </button>
      </div>
      <Sep m="ml-8" />
      <div className="ml-1 flex items-center">
        <span className="h-[11px] w-[11px] rounded-full bg-[#43cf3c]" />
        <span className="ml-[3px] h-[6px] w-[6px] rounded-full bg-[#cbcdd0]" />
        <span className="ml-px h-[6px] w-[6px] rounded-full bg-[#cbcdd0]" />
      </div>
      <Sep m="mr-[3px] ml-px" />
      <button type="button" aria-label="查找" className="flex h-7 w-10 items-center justify-center rounded-[3px] border border-[#b9bbbf] bg-[#f6f7f8] shadow-[0_1px_1px_#c8cacc]">
        <Binoculars />
      </button>
      <Sep m="mx-[3px]" />
      <button type="button" aria-label="几何" className="flex h-7 w-10 items-center justify-center rounded-[3px] border border-[#b9bbbf] bg-[#f6f7f8] shadow-[0_1px_1px_#c8cacc]">
        <Ic w={18} h={16}>
          <path d="M1 5.500H12.500V15H1ZM1 5.500 5.500 1H17L12.500 5.500M17 1V10.500L12.500 15" fill="#fdfdfd" stroke="#222" strokeWidth="1.300" />
          <path d="M2.500 9H7.500V13.500H2.500Z" fill="#fff23a" />
          <circle cx="6" cy="10" r="1.800" fill="#3ed2ee" />
        </Ic>
      </button>
      <div className="relative ml-24 flex">
        <select aria-label="选择过滤器" className="h-[19px] w-[166px] appearance-none rounded-none border border-[#b9bbbf] bg-[#fafafb] pl-1 text-xs leading-4 text-[#333]">
          <option>智能</option>
        </select>
        <span className="pointer-events-none absolute inset-y-0 right-0 flex w-[15px] items-center justify-center border border-[#b9bbbf] bg-[#eff0f2]">
          <Arrow />
        </span>
      </div>
    </footer>
  );
}

export default function App() {
  return (
    <div className="flex h-screen flex-col bg-[#c9cfd3] font-['Roboto','Noto_Sans_CJK_SC',sans-serif] text-[#333538]">
      <div className="h-1 shrink-0 bg-[linear-gradient(90deg,#c9cfd3_18%,#8c8f92_19%,#8c8f92_33.500%,#c9cfd3_34.500%,#c9cfd3_85%,#929598_86.500%,#929598)]" />
      <div className="mr-1 mb-1 ml-1 flex min-h-0 flex-1 flex-col bg-[#fbfbfb]">
        <TitleBar />
        <Tabs />
        <Ribbon />
        <div className="flex min-h-0 flex-1">
          <ModelTree />
          <Viewport />
        </div>
        <StatusBar />
      </div>
    </div>
  );
}
